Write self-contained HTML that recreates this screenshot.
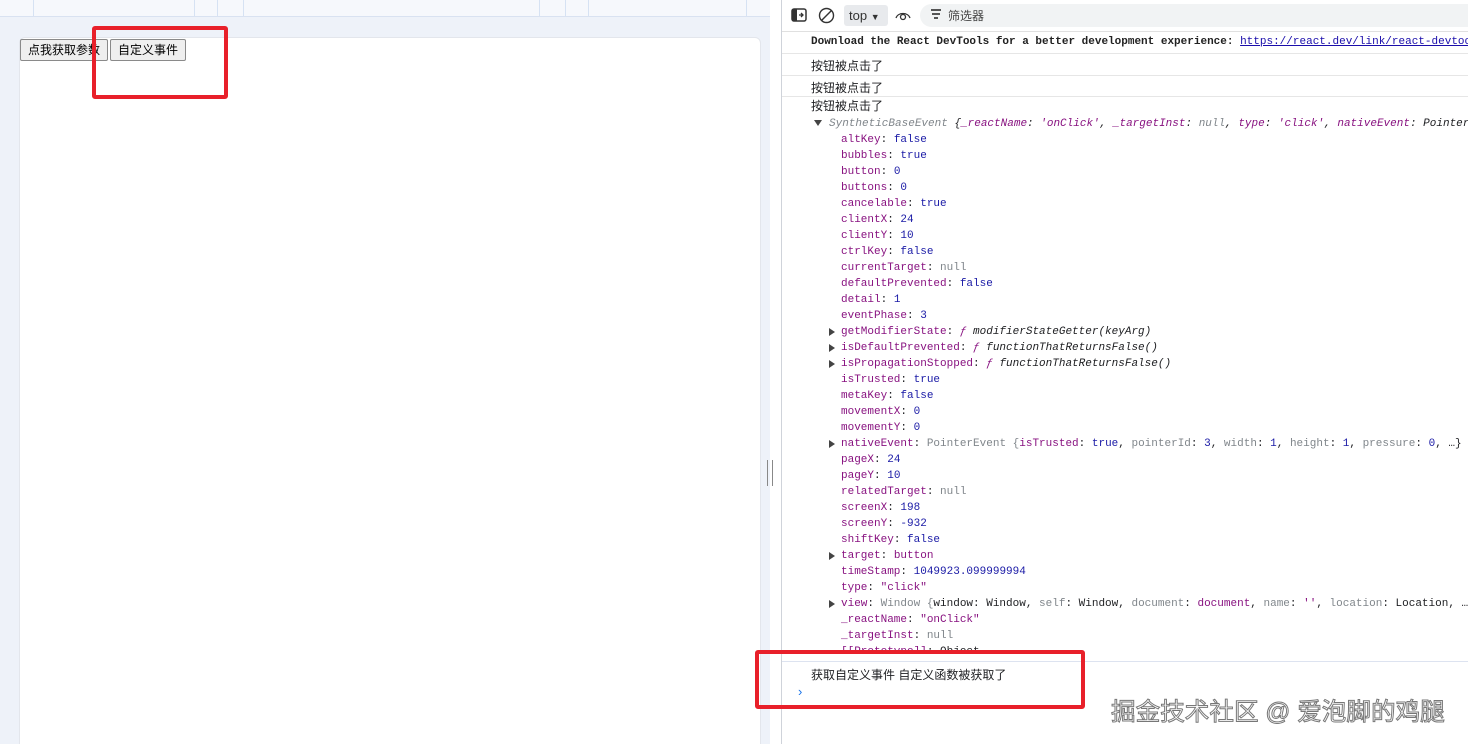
<!DOCTYPE html>
<html><head><meta charset="utf-8">
<style>
*{margin:0;padding:0;box-sizing:border-box}
html,body{width:1468px;height:744px;overflow:hidden}
body{background:#fff;font-family:"Liberation Sans","Noto Sans CJK SC",sans-serif;position:relative}
#left{position:absolute;left:0;top:0;width:770px;height:744px;background:#eef2f9;overflow:hidden}
#topbar{position:absolute;left:0;top:0;width:770px;height:17px;background:#f6f8fc;border-bottom:1px solid #d9e2f1}
.vl{position:absolute;top:0;width:1px;height:16px;background:#d6e2f3}
#card{position:absolute;left:19px;top:37px;width:742px;height:720px;background:#fff;border:1px solid #e3e6ec;border-radius:6px}
.btn{position:absolute;top:39px;height:22px;background:#efefef;border:1px solid #8a8a8a;border-radius:2px;font-size:12px;line-height:20px;padding:0 7px;color:#000}
.red{position:absolute;border:4px solid #e8202a;border-radius:3px}
#split{position:absolute;left:767px;top:460px;width:6px;height:26px;border-left:1px solid #888;border-right:1px solid #888}
#dev{position:absolute;left:781px;top:0;width:687px;height:744px;background:#fff;border-left:1px solid #cfd3da;overflow:hidden}
#tb{position:absolute;left:0;top:0;width:687px;height:32px;border-bottom:1px solid #e0e0e0;background:#fff}
.mono{font-family:"Liberation Mono","Noto Sans CJK SC",monospace;font-size:11px}
.ln{position:absolute;left:29px;white-space:nowrap;font-size:12px;color:#202124}
.p{position:absolute;left:59px;white-space:nowrap;line-height:16px;color:#202124}
.k{color:#881280}.b{color:#1a1aa6}.g{color:#80868b}.sv{color:#881280}
.tri{position:absolute;left:-12px;top:4px;width:0;height:0;border-left:6px solid #444;border-top:4px solid transparent;border-bottom:4px solid transparent}
.sep{position:absolute;left:0;width:687px;height:1px;background:#e6e6e6}
</style></head><body>
<div id="left">
 <div id="topbar">
  <div class="vl" style="left:33px"></div><div class="vl" style="left:194px"></div><div class="vl" style="left:217px"></div><div class="vl" style="left:243px"></div><div class="vl" style="left:539px"></div><div class="vl" style="left:565px"></div><div class="vl" style="left:588px"></div><div class="vl" style="left:746px"></div>
 </div>
 <div id="card"></div>
 <div class="btn" style="left:20px">点我获取参数</div>
 <div class="btn" style="left:110px">自定义事件</div>
 <div class="red" style="left:92px;top:26px;width:136px;height:73px"></div>
</div>
<div id="split"></div>
<div id="dev">
 <div style="position:absolute;left:228px;top:0;width:84px;height:2px;background:#1a73e8"></div>
 <div id="tb">
  <svg style="position:absolute;left:9px;top:8px" width="16" height="14" viewBox="0 0 16 14"><rect x="1" y="1" width="14" height="12" rx="2" fill="none" stroke="#333" stroke-width="1.5"/><rect x="1" y="1" width="5" height="12" fill="#333"/><path d="M8 7h4M10 5l2 2-2 2" stroke="#333" fill="none" stroke-width="1.3"/></svg>
  <svg style="position:absolute;left:36px;top:7px" width="17" height="17" viewBox="0 0 17 17"><circle cx="8.5" cy="8.5" r="7" fill="none" stroke="#333" stroke-width="1.4"/><path d="M3.5 13.5L13.5 3.5" stroke="#333" stroke-width="1.4"/></svg>
  <div style="position:absolute;left:62px;top:5px;width:44px;height:21px;background:#e8eaed;border-radius:3px;font-size:13px;line-height:21px;padding-left:5px;color:#333">top <span style="font-size:9px">▼</span></div>
  <svg style="position:absolute;left:113px;top:9px" width="16" height="12" viewBox="0 0 16 12"><path d="M1 9C3 3 13 3 15 9" fill="none" stroke="#333" stroke-width="1.3"/><circle cx="8" cy="8" r="2.5" fill="none" stroke="#333" stroke-width="1.3"/></svg>
  <div style="position:absolute;left:138px;top:4px;width:549px;height:23px;background:#f1f3f4;border-radius:12px 0 0 12px"></div>
  <div style="position:absolute;left:149px;top:9px;width:10px;height:1.5px;background:#555"></div>
  <div style="position:absolute;left:150px;top:13px;width:8px;height:1.5px;background:#555"></div>
  <div style="position:absolute;left:152px;top:17px;width:4px;height:1.5px;background:#555"></div>
  <div style="position:absolute;left:166px;top:7px;font-size:12px;color:#444">筛选器</div>
 </div>
 <div class="ln mono" style="top:36px;font-size:11px;font-weight:bold;color:#222">Download the React DevTools for a better development experience: <span style="color:#1a0dab;text-decoration:underline;font-weight:normal">https://react.dev/link/react-devtools</span></div>
 <div class="sep" style="top:53px"></div>
 <div class="ln" style="top:57px">按钮被点击了</div>
 <div class="sep" style="top:75px"></div>
 <div class="ln" style="top:79px">按钮被点击了</div>
 <div class="sep" style="top:96px"></div>
 <div class="ln" style="top:97px">按钮被点击了</div>
 <div class="p mono" style="left:47px;top:116px;font-style:italic"><span style="position:absolute;left:-15px;top:4px;width:0;height:0;border-top:6px solid #444;border-left:4px solid transparent;border-right:4px solid transparent"></span><span class="g">SyntheticBaseEvent </span>{<span class="k">_reactName</span>: <span class="sv">'onClick'</span>, <span class="k">_targetInst</span>: <span class="g">null</span>, <span class="k">type</span>: <span class="sv">'click'</span>, <span class="k">nativeEvent</span>: Pointer</div>
 <div class="mono">
 <div class="p" style="top:132px"><span class="k">altKey</span>: <span class="b">false</span></div>
 <div class="p" style="top:148px"><span class="k">bubbles</span>: <span class="b">true</span></div>
 <div class="p" style="top:164px"><span class="k">button</span>: <span class="b">0</span></div>
 <div class="p" style="top:180px"><span class="k">buttons</span>: <span class="b">0</span></div>
 <div class="p" style="top:196px"><span class="k">cancelable</span>: <span class="b">true</span></div>
 <div class="p" style="top:212px"><span class="k">clientX</span>: <span class="b">24</span></div>
 <div class="p" style="top:228px"><span class="k">clientY</span>: <span class="b">10</span></div>
 <div class="p" style="top:244px"><span class="k">ctrlKey</span>: <span class="b">false</span></div>
 <div class="p" style="top:260px"><span class="k">currentTarget</span>: <span class="g">null</span></div>
 <div class="p" style="top:276px"><span class="k">defaultPrevented</span>: <span class="b">false</span></div>
 <div class="p" style="top:292px"><span class="k">detail</span>: <span class="b">1</span></div>
 <div class="p" style="top:308px"><span class="k">eventPhase</span>: <span class="b">3</span></div>
 <div class="p" style="top:324px"><i class="tri"></i><span class="k">getModifierState</span>: <i class="k">ƒ </i><i>modifierStateGetter(keyArg)</i></div>
 <div class="p" style="top:340px"><i class="tri"></i><span class="k">isDefaultPrevented</span>: <i class="k">ƒ </i><i>functionThatReturnsFalse()</i></div>
 <div class="p" style="top:356px"><i class="tri"></i><span class="k">isPropagationStopped</span>: <i class="k">ƒ </i><i>functionThatReturnsFalse()</i></div>
 <div class="p" style="top:372px"><span class="k">isTrusted</span>: <span class="b">true</span></div>
 <div class="p" style="top:388px"><span class="k">metaKey</span>: <span class="b">false</span></div>
 <div class="p" style="top:404px"><span class="k">movementX</span>: <span class="b">0</span></div>
 <div class="p" style="top:420px"><span class="k">movementY</span>: <span class="b">0</span></div>
 <div class="p" style="top:436px"><i class="tri"></i><span class="k">nativeEvent</span>: <span class="g">PointerEvent {</span><span class="k">isTrusted</span>: <span class="b">true</span>, <span class="g">pointerId</span>: <span class="b">3</span>, <span class="g">width</span>: <span class="b">1</span>, <span class="g">height</span>: <span class="b">1</span>, <span class="g">pressure</span>: <span class="b">0</span>, …}</div>
 <div class="p" style="top:452px"><span class="k">pageX</span>: <span class="b">24</span></div>
 <div class="p" style="top:468px"><span class="k">pageY</span>: <span class="b">10</span></div>
 <div class="p" style="top:484px"><span class="k">relatedTarget</span>: <span class="g">null</span></div>
 <div class="p" style="top:500px"><span class="k">screenX</span>: <span class="b">198</span></div>
 <div class="p" style="top:516px"><span class="k">screenY</span>: <span class="b">-932</span></div>
 <div class="p" style="top:532px"><span class="k">shiftKey</span>: <span class="b">false</span></div>
 <div class="p" style="top:548px"><i class="tri"></i><span class="k">target</span>: <span class="sv">button</span></div>
 <div class="p" style="top:564px"><span class="k">timeStamp</span>: <span class="b">1049923.099999994</span></div>
 <div class="p" style="top:580px"><span class="k">type</span>: <span class="sv">"click"</span></div>
 <div class="p" style="top:596px"><i class="tri"></i><span class="k">view</span>: <span class="g">Window {</span>window: Window, <span class="g">self</span>: Window, <span class="g">document</span>: <span class="sv">document</span>, <span class="g">name</span>: <span class="sv">''</span>, <span class="g">location</span>: Location, …</div>
 <div class="p" style="top:612px"><span class="k">_reactName</span>: <span class="sv">"onClick"</span></div>
 <div class="p" style="top:628px"><span class="k">_targetInst</span>: <span class="g">null</span></div>
 <div class="p" style="top:644px;height:9px;overflow:hidden"><i class="tri"></i><span class="k">[[Prototype]]</span>: Object</div>
 </div>
 <div class="sep" style="top:661px;background:#dde3f0"></div>
 <div class="ln" style="top:666px">获取自定义事件 自定义函数被获取了</div>
 <div style="position:absolute;left:16px;top:684px;color:#1a73e8;font-size:13px">›</div>
</div>
<div class="red" style="left:755px;top:650px;width:330px;height:59px"></div>
<div style="position:absolute;left:1111px;top:692px;font-size:24.6px;color:#fff;-webkit-text-stroke:1px #777;white-space:nowrap">掘金技术社区 @ 爱泡脚的鸡腿</div>
</body></html>
